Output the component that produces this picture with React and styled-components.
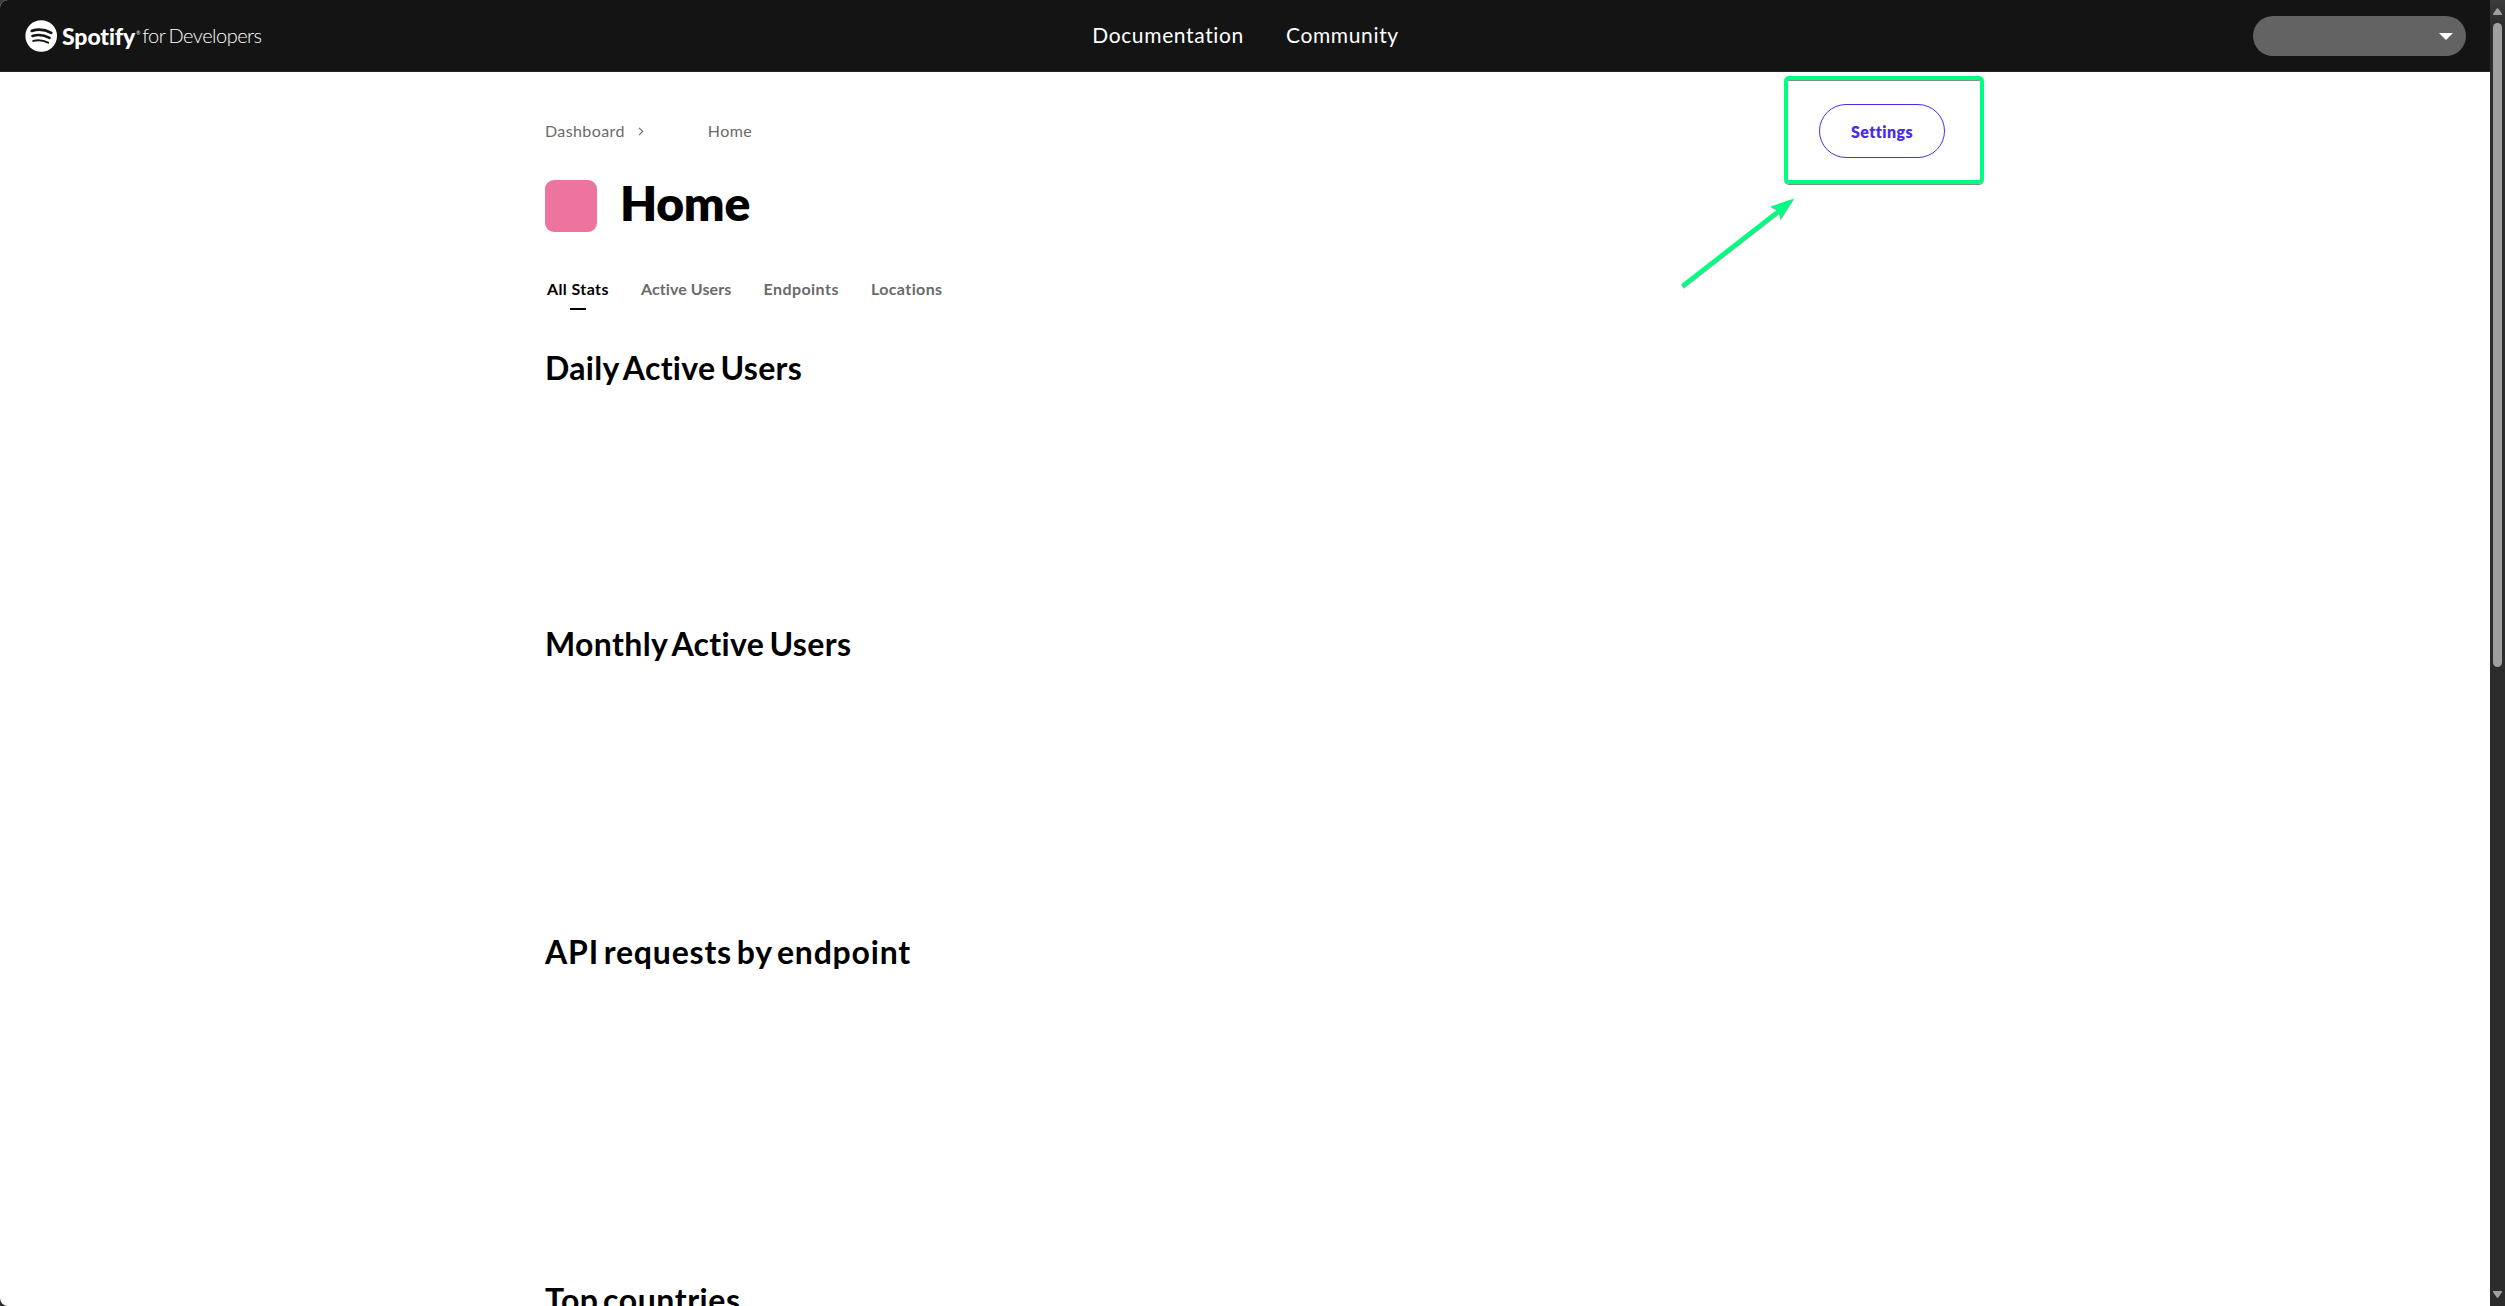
import React from "react";
import styled, { createGlobalStyle } from "styled-components";

const GlobalStyle = createGlobalStyle`
  *, *::before, *::after { box-sizing: border-box; }
  body {
    margin: 0;
    background: #2c2c2c;
    color: #000;
    font-family: Lato, "Open Sans", sans-serif;
    font-variant-ligatures: none;
    overflow: hidden;
  }
  h1, h2, p { margin: 0; }
`;

const Window = styled.div`
  display: flex;
  width: 2505px;
  height: 1306px;
  overflow: hidden;
  background: linear-gradient(#3c3c3c, #2c2c2c 24px);
`;

const Page = styled.div`
  position: relative;
  width: 2490px;
  height: 1306px;
  overflow: hidden;
  background: #fff;
  border-radius: 8px 0 0 8px;
`;

const Header = styled.header`
  display: grid;
  grid-template-columns: 1fr auto 1fr;
  align-items: center;
  height: 72px;
  padding: 0 24px 0 25px;
  background: #141414;
  border-bottom: 1px solid #2a2526;
`;

const Brand = styled.a`
  display: flex;
  align-items: center;
  height: 40px;
  color: #fff;
`;

const BrandIcon = styled.svg`
  width: 32px;
  height: 32px;
  margin-right: 5px;
`;

const BrandName = styled.span`
  font-size: 23px;
  line-height: 38px;
  font-weight: 900;
  letter-spacing: -0.1px;
`;

const Registered = styled.span`
  width: 7px;
  font-size: 5px;
  line-height: 5px;
  padding: 0 0 4px 1px;
`;

const BrandSuffix = styled.span`
  font-size: 20px;
  line-height: 36px;
  font-weight: 300;
  letter-spacing: -0.5px;
  word-spacing: -1.3px;
  padding-bottom: 2px;
`;

const Nav = styled.nav`
  display: flex;
  gap: 42px;
`;

const NavLink = styled.a`
  color: #fff;
  font-size: 21px;
  line-height: 38px;
  letter-spacing: 0.64px;
  padding-bottom: 2px;
`;

const AccountButton = styled.button`
  justify-self: end;
  display: flex;
  align-items: center;
  justify-content: flex-end;
  width: 213px;
  height: 40px;
  padding: 1px 13px 0 0;
  border: 0;
  border-radius: 20px;
  background: #636363;
`;

const Caret = styled.span`
  border: 7px solid transparent;
  border-top-color: #fff;
  border-bottom: 0;
`;

const Main = styled.main`
  width: 1400px;
  margin: 0 auto;
  padding-top: 32px;
`;

const TopRow = styled.div`
  display: flex;
  align-items: center;
  justify-content: space-between;
  height: 54px;
`;

const Breadcrumb = styled.div`
  display: flex;
  align-items: center;
  color: #6a6a6a;
  font-size: 16px;
  line-height: 24px;
  letter-spacing: 0.4px;
`;

const Chevron = styled.svg`
  width: 6px;
  height: 9px;
  margin: 1px 64px 0 13px;
`;

const SettingsButton = styled.button`
  width: 126px;
  height: 54px;
  padding: 1px 0 0;
  border: 1px solid #4b2de8;
  border-radius: 27px;
  background: transparent;
  color: #4b2de8;
  font: 800 16px/24px Lato, sans-serif;
  letter-spacing: 0.4px;
`;

const TitleRow = styled.div`
  display: flex;
  align-items: center;
  gap: 23px;
  height: 52px;
  margin-top: 22px;
`;

const AppIcon = styled.div`
  width: 52px;
  height: 52px;
  border-radius: 9px;
  background: #ed749f;
`;

const Title = styled.h1`
  font-size: 48px;
  line-height: 56px;
  font-weight: 800;
  letter-spacing: -0.3px;
  margin-top: -6px;
`;

const Tabs = styled.div`
  display: flex;
  gap: 32px;
  height: 34px;
  margin: 44px 0 0 2px;
`;

const Tab = styled.a`
  display: flex;
  flex-direction: column;
  align-items: center;
  color: ${(p) => (p.$active ? "#000" : "#6a6a6a")};
  font-size: 16px;
  line-height: 26px;
  font-weight: 700;
  letter-spacing: ${(p) => p.$spacing}px;

  &::after {
    content: "";
    width: 16px;
    height: 2px;
    margin-top: 6px;
    background: ${(p) => (p.$active ? "#000" : "transparent")};
  }
`;

const Section = styled.section`
  height: ${(p) => p.$height}px;
`;

const SectionTitle = styled.h2`
  padding-top: 38px;
  font-size: 32px;
  line-height: 40px;
  font-weight: 700;
  letter-spacing: ${(p) => p.$spacing}px;
  word-spacing: ${(p) => p.$wordSpacing}px;
`;

const Callout = styled.div`
  position: absolute;
  left: 1784px;
  top: 76px;
  width: 200px;
  height: 108px;
  border: 4px solid #00ff80;
  border-radius: 5px;
  box-shadow: 0 1px 0 #7d8f86, inset 0 1px 0 #7d8f86;
`;

const Arrow = styled.svg`
  position: absolute;
  left: 1676px;
  top: 190px;
  width: 124px;
  height: 104px;
  filter: drop-shadow(0 1px 0 rgba(90, 90, 90, 0.5));
`;

const Scrollbar = styled.div`
  display: flex;
  flex-direction: column;
  width: 15px;
  height: 1306px;
  padding: 8px 3px 8px 3px;
`;

const ScrollArrow = styled.svg`
  width: 9px;
  height: 7px;
`;

const ScrollThumb = styled.div`
  width: 9px;
  height: 644px;
  margin: 8px 0 auto;
  border-radius: 4.5px;
  background: #9f9f9f;
`;

const tabs = [
  { label: "All Stats", active: true, spacing: 0.4 },
  { label: "Active Users", spacing: 0.1 },
  { label: "Endpoints", spacing: 0.45 },
  { label: "Locations", spacing: 0.4 },
];

const sections = [
  { title: "Daily Active Users", spacing: 0.3, wordSpacing: -3, height: 276 },
  { title: "Monthly Active Users", spacing: 0.35, wordSpacing: -3, height: 308 },
  { title: "API requests by endpoint", spacing: 0.8, wordSpacing: -3.8, height: 348 },
  { title: "Top countries", spacing: 0.55, wordSpacing: -3.8, height: 348 },
];

export default function App() {
  return (
    <>
      <GlobalStyle />
      <Window>
        <Page>
          <Header>
            <Brand>
              <BrandIcon viewBox="0 0 32 32">
                <circle cx="16.2" cy="16" r="15.8" fill="#fff" />
                <g fill="none" stroke="#141414" strokeLinecap="round">
                  <path d="M6.8 10.8 C13 9 20.5 9.7 26.2 12.9" strokeWidth="2.8" />
                  <path d="M7.4 16 C13 14.3 19.3 15 24.6 17.9" strokeWidth="2.4" />
                  <path d="M8.2 20.9 C13 19.6 18.4 20.2 23.1 22.7" strokeWidth="2" />
                </g>
              </BrandIcon>
              <BrandName>Spotify</BrandName>
              <Registered>®</Registered>
              <BrandSuffix>for Developers</BrandSuffix>
            </Brand>
            <Nav>
              <NavLink>Documentation</NavLink>
              <NavLink>Community</NavLink>
            </Nav>
            <AccountButton>
              <Caret />
            </AccountButton>
          </Header>
          <Main>
            <TopRow>
              <Breadcrumb>
                <span>Dashboard</span>
                <Chevron viewBox="0 0 6 9">
                  <path d="M1 .8 4.7 4.5 1 8.2" fill="none" stroke="#6a6a6a" strokeWidth="1.1" />
                </Chevron>
                <span>Home</span>
              </Breadcrumb>
              <SettingsButton>Settings</SettingsButton>
            </TopRow>
            <TitleRow>
              <AppIcon />
              <Title>Home</Title>
            </TitleRow>
            <Tabs>
              {tabs.map((t) => (
                <Tab key={t.label} $active={t.active} $spacing={t.spacing}>
                  {t.label}
                </Tab>
              ))}
            </Tabs>
            {sections.map((s) => (
              <Section key={s.title} $height={s.height}>
                <SectionTitle $spacing={s.spacing} $wordSpacing={s.wordSpacing}>
                  {s.title}
                </SectionTitle>
              </Section>
            ))}
          </Main>
          <Callout />
          <Arrow viewBox="0 0 124 104">
            <path d="M6.5 96 104 20" stroke="#00ff80" strokeWidth="4.4" />
            <path d="M118 8.5 94.5 16.5 102.5 20.5 104.5 29.5Z" fill="#00ff80" />
          </Arrow>
        </Page>
        <Scrollbar>
          <ScrollArrow viewBox="0 0 9 7">
            <path d="M3.5 .8Q4.5-.4 5.5.8L9 6v1H0V6Z" fill="#9f9f9f" />
          </ScrollArrow>
          <ScrollThumb />
          <ScrollArrow viewBox="0 0 9 7">
            <path d="M3.5 6.2Q4.5 7.4 5.5 6.2L9 1V0H0V1Z" fill="#9f9f9f" />
          </ScrollArrow>
        </Scrollbar>
      </Window>
    </>
  );
}
